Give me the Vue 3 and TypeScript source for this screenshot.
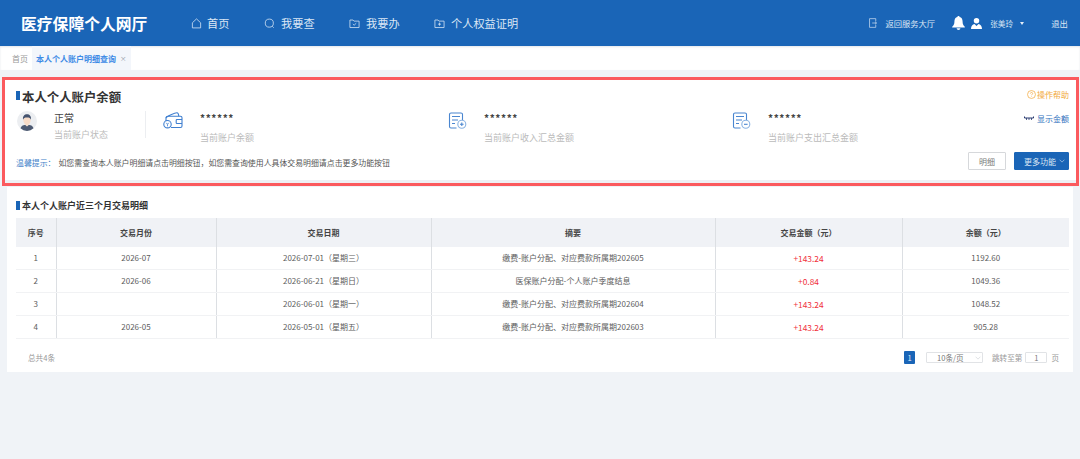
<script setup lang="ts">
interface TxRow {
  no: number
  month: string
  date: string
  summary: string
  amount: string
  balance: string
}

const navItems: { key: string; label: string }[] = [
  { key: 'home', label: '首页' },
  { key: 'search', label: '我要查' },
  { key: 'todo', label: '我要办' },
  { key: 'proof', label: '个人权益证明' }
]

const rows: TxRow[] = [
  { no: 1, month: '2026-07', date: '2026-07-01（星期三）', summary: '缴费-账户分配、对应费款所属期202605', amount: '+143.24', balance: '1192.60' },
  { no: 2, month: '2026-06', date: '2026-06-21（星期日）', summary: '医保账户分配-个人账户季度结息', amount: '+0.84', balance: '1049.36' },
  { no: 3, month: '', date: '2026-06-01（星期一）', summary: '缴费-账户分配、对应费款所属期202604', amount: '+143.24', balance: '1048.52' },
  { no: 4, month: '2026-05', date: '2026-05-01（星期五）', summary: '缴费-账户分配、对应费款所属期202603', amount: '+143.24', balance: '905.28' }
]
</script>

<template>
  <div class="page">
    <header class="topbar">
      <h1 class="brand">医疗保障个人网厅</h1>
      <nav class="nav">
        <a v-for="item in navItems" :key="item.key" class="nav-item" :class="`nav-item--${item.key}`">
          <svg class="nav-icon" viewBox="0 0 12 12" fill="none" stroke="#cfe0f3" stroke-width="0.9">
            <path v-if="item.key === 'home'" d="M1.5 5.2 6 1l4.5 4.2v5.600h-9z" stroke-linejoin="round" />
            <template v-else-if="item.key === 'search'">
              <circle cx="5.800" cy="5.600" r="4.400" />
              <path d="M9 9l1.600 1.600" />
            </template>
            <template v-else-if="item.key === 'todo'">
              <path d="M1 2.200h3.400l1 1.200H11v7H1z" />
              <path d="M4.200 6.600l1.400 1.300 2.300-2.200" />
            </template>
            <template v-else>
              <path d="M1 2.200h3.400l1 1.200H11v7H1z" />
              <path d="M6 5v3.400M4.300 6.700h3.400" />
            </template>
          </svg>
          <span>{{ item.label }}</span>
        </a>
      </nav>
      <div class="top-actions">
        <a class="back-link">
          <svg class="door" viewBox="0 0 9 11" fill="none" stroke="#cfe0f3" stroke-width="0.8">
            <path d="M7.600 3.600V.6H.6v9.800h7V7.600" />
            <path d="M3.600 5.500h5M6.800 4l1.600 1.500L6.800 7" />
          </svg>
          <span>返回服务大厅</span>
        </a>
        <svg class="bell" viewBox="0 0 14 15" fill="#fff">
          <path d="M7 0c.8 0 1.200.5 1.200 1.100C10.400 1.700 11.400 3.500 11.400 6c0 2.800.8 4.200 2.400 5.600v.8H.2v-.8C1.800 10.200 2.600 8.800 2.600 6c0-2.500 1-4.300 3.200-4.900C5.800.5 6.200 0 7 0z" />
          <path d="M5 13.200h4c0 1-.9 1.800-2 1.800s-2-.8-2-1.800z" />
        </svg>
        <svg class="user" viewBox="0 0 12 12" fill="#fff">
          <circle cx="6" cy="3" r="3" />
          <path d="M0 12c0-3.200 1.800-5 3.800-5.400L6 8.600l2.200-2C10.200 7 12 8.800 12 12z" />
        </svg>
        <span class="user-name">张美玲</span>
        <span class="caret"></span>
        <a class="logout">退出</a>
      </div>
    </header>

    <div class="tabs">
      <span class="tab-home">首页</span>
      <span class="tab-active">本人个人账户明细查询<i class="tab-close">×</i></span>
    </div>

    <section class="highlight">
      <div class="balance-card">
        <div class="balance-head">
          <h2 class="heading heading--large"><i class="heading-bar"></i>本人个人账户余额</h2>
          <a class="help">
            <svg viewBox="0 0 10 10" fill="none" stroke="#f2a93b" stroke-width="0.8">
              <circle cx="5" cy="5" r="4.400" />
              <path d="M3.700 4c0-.8.6-1.300 1.300-1.300s1.300.5 1.300 1.200c0 1-1.300 1-1.300 2M5 7v.6" />
            </svg>
            操作帮助
          </a>
        </div>

        <div class="stats">
          <div class="stat stat--status">
            <svg class="avatar" viewBox="0 0 20 20">
              <circle cx="10" cy="10" r="10" fill="#eceef1" />
              <path d="M3.500 17.300c.6-2.600 2.800-3.600 6.500-3.600s5.900 1 6.500 3.600A10 10 0 0 1 10 20a10 10 0 0 1-6.500-2.700z" fill="#4d5a72" />
              <path d="M7.500 13.200h5L10 15.400z" fill="#f8e3d3" />
              <ellipse cx="10" cy="9.200" rx="3.600" ry="4.800" fill="#f8dcc8" />
              <path d="M6.100 8.800C5.400 5 7.500 3.200 10 3.200s4.600 1.800 3.900 5.600c-.5-1.700-1.500-2.300-3.900-2.300s-3.400.6-3.900 2.300z" fill="#44536f" />
            </svg>
            <div class="stat-text">
              <div class="stat-value">正常</div>
              <div class="stat-label stat-label--tight">当前账户状态</div>
            </div>
          </div>

          <div class="stat stat--wallet">
            <svg class="stat-icon" viewBox="0 0 20 17" fill="none" stroke="#3f7fd0" stroke-width="1.100" stroke-linejoin="round">
              <path d="M3 6C3.500 4 12 .8 14 .8c1.200 0 1.600 1.400 1.800 3.400" />
              <path d="M3 6c0-1 1-1.800 2-1.800h12.500c.9 0 1.500.6 1.500 1.500V14c0 .9-.6 1.500-1.500 1.500H8" />
              <path d="M3 6v3" />
              <path d="M19 7.500h-5a.8.8 0 0 0-.8.8v2.400c0 .5.300.8.8.8h5" />
              <circle cx="4.500" cy="12.200" r="3.700" />
              <path d="M3.200 10.800l1.300 1.500 1.300-1.500M4.500 12.300v2" stroke-width="0.8" />
            </svg>
            <div class="stat-text">
              <div class="stat-mask">******</div>
              <div class="stat-label">当前账户余额</div>
            </div>
          </div>

          <div class="stat stat--sum">
            <svg class="stat-icon stat-icon--doc" viewBox="0 0 18 17" fill="none" stroke="#4a86d0" stroke-width="1.100">
              <path d="M8 16H2.500A1.500 1.500 0 0 1 1 14.500v-12A1.500 1.500 0 0 1 2.500 1h10A1.500 1.500 0 0 1 14 2.500V8" />
              <path d="M3.500 4.500h8M3.500 8h6M3.500 11.500h3" />
              <circle cx="13.300" cy="12.300" r="4" stroke="#8ab3e3" />
              <path d="M11.500 12.300h3.600M13.300 10.500v3.600" />
            </svg>
            <div class="stat-text">
              <div class="stat-mask">******</div>
              <div class="stat-label">当前账户收入汇总金额</div>
            </div>
          </div>

          <div class="stat stat--sum">
            <svg class="stat-icon stat-icon--doc" viewBox="0 0 18 17" fill="none" stroke="#4a86d0" stroke-width="1.100">
              <path d="M8 16H2.500A1.500 1.500 0 0 1 1 14.500v-12A1.500 1.500 0 0 1 2.500 1h10A1.500 1.500 0 0 1 14 2.500V8" />
              <path d="M3.500 4.500h8M3.500 8h6M3.500 11.500h3" />
              <circle cx="13.300" cy="12.300" r="4" stroke="#8ab3e3" />
              <path d="M11.500 12.300h3.600" />
            </svg>
            <div class="stat-text">
              <div class="stat-mask">******</div>
              <div class="stat-label">当前账户支出汇总金额</div>
            </div>
          </div>

          <a class="toggle">
            <svg viewBox="0 0 10 5" fill="none" stroke="#27386e" stroke-width="1">
              <path d="M.5.5v1.500h9V.5" />
              <path d="M2.500 2v2M5 2v2M7.500 2v2" stroke-width="0.8" />
            </svg>
            显示金额
          </a>
        </div>

        <div class="balance-foot">
          <p class="notice"><span class="notice-tag">温馨提示：</span>如您需查询本人账户明细请点击明细按钮，如您需查询使用人具体交易明细请点击更多功能按钮</p>
          <div class="btns">
            <button class="btn">明细</button>
            <button class="btn btn--primary">更多功能<svg viewBox="0 0 8 5" fill="none" stroke="#cfe0f3" stroke-width="0.8"><path d="M.8.8 4 4 7.200.8" /></svg></button>
          </div>
        </div>
      </div>
    </section>

    <section class="detail-card">
      <h2 class="heading heading--small"><i class="heading-bar"></i>本人个人账户近三个月交易明细</h2>
      <table class="tx-table">
        <colgroup>
          <col class="col-no" />
          <col class="col-month" />
          <col class="col-date" />
          <col class="col-summary" />
          <col class="col-amount" />
          <col />
        </colgroup>
        <thead>
          <tr>
            <th>序号</th>
            <th>交易月份</th>
            <th>交易日期</th>
            <th>摘要</th>
            <th>交易金额（元）</th>
            <th>余额（元）</th>
          </tr>
        </thead>
        <tbody>
          <tr v-for="row in rows" :key="row.no">
            <td>{{ row.no }}</td>
            <td>{{ row.month }}</td>
            <td>{{ row.date }}</td>
            <td>{{ row.summary }}</td>
            <td class="amount">{{ row.amount }}</td>
            <td>{{ row.balance }}</td>
          </tr>
        </tbody>
      </table>
      <div class="pager-row">
        <span class="total">总共4条</span>
        <div class="pager">
          <span class="page-num">1</span>
          <span class="page-size">10条/页<svg viewBox="0 0 8 5" fill="none" stroke="#c4c8ce" stroke-width="0.7"><path d="M.8.8 4 4 7.200.8" /></svg></span>
          <span class="jump">跳转至第</span>
          <span class="jump-input">1</span>
          <span class="jump">页</span>
        </div>
      </div>
    </section>
  </div>
</template>

<style>
html,
body {
  margin: 0;
  background: #f0f3f7;
}
</style>

<style scoped>
.page {
  width: 1080px;
  height: 459px;
  overflow: hidden;
  background: #f0f3f7;
  font-family: "Noto Sans CJK SC", "Noto Sans", sans-serif;
  color: #555;
}

/* top bar */
.topbar {
  height: 46px;
  display: flex;
  align-items: center;
  background: #1a65b7;
  color: #dbe7f5;
  box-sizing: border-box;
  padding-left: 21px;
}

.brand {
  margin: 0 44px 0 0;
  width: 126px;
  font-size: 15.800px;
  font-weight: 700;
  color: #fff;
  white-space: nowrap;
}

.nav {
  display: flex;
  align-items: center;
}

.nav-item {
  display: flex;
  align-items: center;
  gap: 6px;
  font-size: 11.200px;
}

.nav-item--home { width: 73px; gap: 5px; }
.nav-item--search { width: 85px; }
.nav-item--todo { width: 85px; }

.nav-icon {
  width: 11px;
  height: 11px;
}

.top-actions {
  margin-left: auto;
  display: flex;
  align-items: center;
  font-size: 8px;
  padding-right: 12px;
}

.back-link {
  display: flex;
  align-items: center;
  gap: 8px;
  margin-right: 17px;
  font-size: 8.300px;
}

.door {
  width: 8px;
  height: 10px;
}

.bell {
  width: 13px;
  height: 14px;
  margin-right: 6px;
}

.user {
  width: 11px;
  height: 11px;
  margin-right: 8px;
}

.user-name {
  margin-right: 7px;
  font-size: 7.700px;
}

.caret {
  width: 0;
  height: 0;
  border-left: 2.500px solid transparent;
  border-right: 2.500px solid transparent;
  border-top: 3px solid #e6eef8;
  margin-right: 27px;
}

.logout {
  font-size: 8.400px;
}

/* tabs */
.tabs {
  height: 24px;
  display: flex;
  align-items: center;
  background: #fff;
  font-size: 8px;
  box-shadow: inset 0 1px 2px rgba(20, 50, 90, 0.12);
}

.tab-home {
  padding-left: 12px;
  width: 20px;
  color: #999;
}

.tab-active {
  align-self: stretch;
  display: flex;
  align-items: center;
  padding: 0 4px 0 4px;
  background: #f3f6fb;
  color: #3d8ae6;
  font-weight: 700;
}

.tab-close {
  margin-left: 4px;
  font-size: 6.500px;
  font-style: normal;
  font-weight: 400;
  color: #9aa3ad;
}

/* highlighted balance block */
.highlight {
  margin: 7px 1px 0 2px;
  height: 109px;
  box-sizing: border-box;
  border: 3px solid #fb5a5e;
  background: #eef0f4;
}

.balance-card {
  height: 100px;
  box-sizing: border-box;
  background: #fff;
  padding: 7px 7px 0 11px;
  display: flex;
  flex-direction: column;
}

.balance-head {
  height: 20px;
  display: flex;
  align-items: center;
  justify-content: space-between;
}

.heading {
  margin: 0;
  display: flex;
  align-items: center;
  color: #333;
  font-weight: 700;
  white-space: nowrap;
}

.heading-bar {
  display: block;
  width: 4px;
  margin-right: 2px;
  background: #1a65b7;
}

.heading--large {
  font-size: 12.400px;
}

.heading--large .heading-bar {
  height: 9px;
  margin-top: -4px;
}

.heading--small {
  font-size: 9px;
  height: 16px;
  margin-bottom: 5px;
}

.heading--small .heading-bar {
  height: 9px;
}

.help {
  display: flex;
  align-items: center;
  gap: 1px;
  font-size: 8px;
  color: #f2a93b;
  margin-top: -5px;
}

.help svg {
  width: 9px;
  height: 9px;
}

.stats {
  margin-top: 4px;
  height: 33px;
  display: grid;
  grid-template-columns: 130px 285px 284px 1fr auto;
  align-items: start;
}

.stat {
  display: flex;
  align-items: flex-start;
}

.stat--status {
  padding-left: 1px;
  height: 27px;
  border-right: 1px solid #eceef1;
  box-sizing: border-box;
}

.stat--wallet {
  padding: 1px 0 0 17px;
  gap: 17px;
}

.stat--sum {
  padding-top: 1px;
  margin-left: 17px;
  gap: 17px;
}

.avatar {
  width: 20px;
  height: 20px;
  margin-right: 17px;
}

.stat-icon {
  width: 20px;
  height: 17px;
  flex: none;
}

.stat-icon--doc {
  width: 19px;
}

.stat-text {
  display: flex;
  flex-direction: column;
}

.stat-value {
  font-size: 10px;
  line-height: 14px;
  color: #444;
}

.stat-mask {
  font-size: 10px;
  line-height: 11px;
  letter-spacing: 0.6px;
  color: #444;
  font-weight: 700;
}

.stat-label {
  font-size: 9px;
  line-height: 12px;
  margin-top: 9px;
  color: #bbb;
}

.stat-label--tight {
  margin-top: 4px;
}

.toggle {
  display: flex;
  align-items: center;
  gap: 3px;
  font-size: 8px;
  color: #2f6fbd;
  margin-top: 2px;
}

.toggle svg {
  width: 10px;
  height: 5px;
}

.balance-foot {
  margin-top: 8px;
  height: 18px;
  display: flex;
  align-items: center;
  justify-content: space-between;
}

.notice {
  margin: 2px 0 0;
  font-size: 7.900px;
  color: #555;
  white-space: nowrap;
}

.notice-tag {
  color: #3f7fc9;
  margin-right: 3px;
}

.btns {
  display: flex;
  gap: 8px;
}

.btn {
  height: 18px;
  width: 38px;
  padding: 0;
  box-sizing: border-box;
  border: 1px solid #d6d8db;
  border-radius: 1px;
  background: #fff;
  color: #777;
  font-family: inherit;
  font-size: 8px;
}

.btn--primary {
  width: 55px;
  padding-right: 3px;
  border-color: #1a65b7;
  background: #1a65b7;
  color: #dbe7f5;
  display: flex;
  align-items: center;
  justify-content: flex-end;
  gap: 3px;
}

.btn--primary svg {
  width: 6px;
  height: 4px;
}

/* transaction table */
.detail-card {
  margin: 1px 7px 0;
  height: 185px;
  box-sizing: border-box;
  background: #fff;
  padding: 10px 4px 0 9px;
}

.tx-table {
  width: 1053px;
  table-layout: fixed;
  border-collapse: collapse;
  font-size: 8px;
}

.col-no { width: 40px; }
.col-month { width: 160px; }
.col-date { width: 215px; }
.col-summary { width: 284px; }
.col-amount { width: 187px; }

.tx-table th {
  height: 29px;
  padding: 0;
  background: #f0f2f6;
  color: #444;
  font-weight: 700;
  border-left: 1px solid #dcdfe3;
}

.tx-table td {
  height: 22px;
  padding: 0;
  line-height: 1;
  text-align: center;
  color: #5c5c5c;
  border-left: 1px solid #dcdfe3;
  border-bottom: 1px solid #f1f2f4;
}

.tx-table th:first-child,
.tx-table td:first-child {
  border-left: none;
}

.tx-table .amount {
  color: #f0323c;
  font-size: 8.400px;
}

.pager-row {
  margin-top: 11px;
  display: flex;
  align-items: center;
  justify-content: space-between;
  padding: 0 10px 0 12px;
  height: 15px;
  font-size: 7.600px;
  color: #999;
}

.pager {
  display: flex;
  align-items: center;
}

.page-num {
  width: 11px;
  height: 13px;
  display: flex;
  align-items: center;
  justify-content: center;
  border-radius: 1px;
  background: #1a65b7;
  color: #e8f0fa;
  margin-right: 11px;
}

.page-size {
  width: 57px;
  height: 11px;
  box-sizing: border-box;
  border: 1px solid #e1e3e6;
  border-radius: 1px;
  display: flex;
  align-items: center;
  padding-left: 10px;
  margin-right: 9px;
  color: #777;
}

.page-size svg {
  width: 6px;
  height: 4px;
  margin-left: 11px;
}

.jump-input {
  width: 22px;
  height: 11px;
  box-sizing: border-box;
  border: 1px solid #e1e3e6;
  border-radius: 1px;
  display: flex;
  align-items: center;
  justify-content: center;
  margin: 0 4px 0 3px;
  color: #777;
}
</style>
